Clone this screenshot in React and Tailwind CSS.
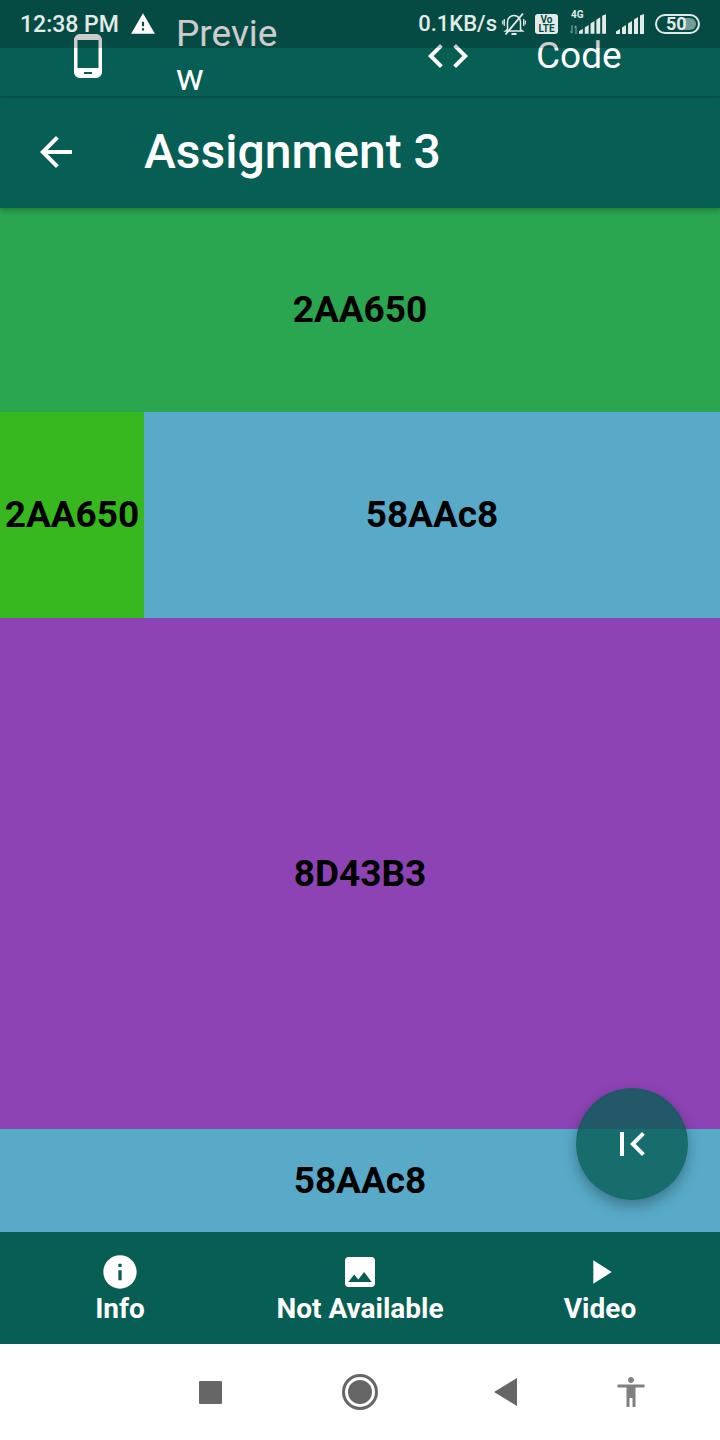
const FONT = { fontFamily: 'Roboto, sans-serif' };

function MaterialIcon({ d, className }) {
  return (
    <svg viewBox="0 0 24 24" fill="currentColor" className={className}>
      <path d={d} />
    </svg>
  );
}

const ICONS = {
  phone: 'M16 1H8C6.34 1 5 2.34 5 4v16c0 1.66 1.34 3 3 3h8c1.66 0 3-1.34 3-3V4c0-1.66-1.34-3-3-3zm-2 20h-4v-1h4v1zm3.25-3H6.75V4h10.5v14z',
  code: 'M9.4 16.6L4.8 12l4.6-4.6L8 6l-6 6 6 6 1.4-1.4zm5.2 0l4.6-4.6-4.6-4.6L16 6l6 6-6 6-1.4-1.4z',
  back: 'M20 11H7.83l5.59-5.59L12 4l-8 8 8 8 1.41-1.41L7.83 13H20v-2z',
  info: 'M12 2C6.48 2 2 6.48 2 12s4.48 10 10 10 10-4.48 10-10S17.52 2 12 2zm1 15h-2v-6h2v6zm0-8h-2V7h2v2z',
  image: 'M21 19V5c0-1.1-.9-2-2-2H5c-1.1 0-2 .9-2 2v14c0 1.1.9 2 2 2h14c1.1 0 2-.9 2-2zM8.5 13.5l2.5 3.01L14.5 12l4.5 6H5l3.5-4.5z',
  play: 'M8 5v14l11-7z',
  warning: 'M1 21h22L12 2 1 21zm12-3h-2v-2h2v2zm0-4h-2v-4h2v4z',
  first: 'M18.41 16.59L13.82 12l4.59-4.59L17 6l-6 6 6 6zM6 6h2v12H6z',
  accessibility: 'M12 2c1.1 0 2 .9 2 2s-.9 2-2 2-2-.9-2-2 .9-2 2-2zm9 7h-6v13h-2v-6h-2v6H9V9H3V7h18v2z',
};

function Signal({ className }) {
  return (
    <svg viewBox="0 0 28 20" fill="currentColor" className={className}>
      <path d="M0 20v-2.5L4 15v5z" />
      <path d="M6 20v-6.5l4-2.5v9z" />
      <path d="M12 20V9.5L16 7v13z" />
      <path d="M18 20V5.5L22 3v17z" />
      <path d="M24 20V1.5L28 0v20z" />
    </svg>
  );
}

function StatusBar() {
  return (
    <div className="absolute top-0 left-0 w-full h-12 bg-black/20 z-20 flex items-center text-[#e3ebe9] font-medium">
      <span className="ml-5 text-[23px] leading-none">12:38 PM</span>
      <MaterialIcon d={ICONS.warning} className="w-[26px] h-[26px] ml-[11px] text-white" />
      <div className="ml-auto flex items-center mr-5">
        <span className="text-[22px] leading-none">0.1KB/s</span>
        <svg viewBox="0 0 24 24" className="w-6 h-6 ml-[5px]" fill="none" stroke="currentColor" strokeWidth="1.5">
          <path d="M5.500 17.500V10a6.500 6.500 0 0 1 13 0v7.500l2 1.500H3.500z" />
          <path d="M9.500 22h5" strokeWidth="2" />
          <path d="M2.300 7v7M21.700 7v7M0.700 8.500v4M23.300 8.500v4" strokeWidth="1.2" />
          <path d="M3.500 22.500 21 1.500" strokeWidth="1.8" />
        </svg>
        <div className="ml-[9px] w-[23px] h-5 bg-[#e3ebe9] rounded-[3px] flex flex-col items-center justify-center text-[#054b43] text-[10px] leading-[9px] font-bold">
          <span>Vo</span>
          <span>LTE</span>
        </div>
        <div className="ml-[12px] relative w-[36px] h-5">
          <span className="absolute -top-[4px] left-[1px] text-[10px] leading-[10px] font-bold">4G</span>
          <svg viewBox="0 0 8 9" className="absolute left-0 bottom-0 w-2 h-[9px] opacity-50" fill="none" stroke="currentColor" strokeWidth="1.2">
            <path d="M2 0v8M0.500 6.500 2 8M6 9V1M4.500 2.500 6 1" />
          </svg>
          <Signal className="absolute right-0 bottom-0 w-[27px] h-5" />
        </div>
        <Signal className="ml-[10px] w-7 h-5" />
        <div className="ml-[11px] w-[45px] h-5 rounded-full border-2 border-[#e3ebe9] relative overflow-hidden flex items-center">
          <div className="absolute inset-y-[2px] right-[2px] w-[12px] rounded-r-full bg-[#e3ebe9]/50" />
          <span className="relative ml-[9px] text-[18px] leading-none font-bold">50</span>
        </div>
      </div>
    </div>
  );
}

function Tab({ icon, label }) {
  return (
    <div className="flex-1 flex items-center pl-16 gap-16 pt-4">
      <MaterialIcon d={icon} className="w-12 h-12 shrink-0" />
      <span className="w-[102px] text-[37px] leading-[44px] break-all">{label}</span>
    </div>
  );
}

function Block({ hex, color, className }) {
  return (
    <div className={`flex items-center justify-center text-[37px] leading-none font-bold text-black ${className}`} style={{ backgroundColor: color }}>
      {hex}
    </div>
  );
}

function BottomItem({ icon, label }) {
  return (
    <div className="flex-1 flex flex-col items-center pt-[20px]">
      <MaterialIcon d={icon} className="w-10 h-10" />
      <span className="mt-[1px] text-[28px] leading-[32px] font-bold">{label}</span>
    </div>
  );
}

export default function App() {
  return (
    <div className="relative w-[720px] h-[1440px] flex flex-col overflow-hidden" style={FONT}>
      <StatusBar />

      <div className="h-24 shrink-0 flex bg-[#075e54] text-white relative z-10 shadow-[0_1px_3px_rgba(0,0,0,0.25)]">
        <Tab icon={ICONS.phone} label="Preview" />
        <Tab icon={ICONS.code} label="Code" />
      </div>

      <div className="h-28 shrink-0 flex items-center bg-[#075e54] text-white pl-8 relative z-[5] shadow-[0_2px_6px_rgba(0,0,0,0.3)]">
        <MaterialIcon d={ICONS.back} className="w-12 h-12" />
        <h1 className="ml-16 text-[48px] leading-none font-medium">Assignment 3</h1>
      </div>

      <div className="flex-1 flex flex-col">
        <Block hex="2AA650" color="#2aa650" className="h-[204px] pb-[2px]" />
        <div className="h-[206px] flex">
          <Block hex="2AA650" color="#38b81f" className="w-[144px] pb-[2px]" />
          <Block hex="58AAc8" color="#58aac8" className="flex-1 pb-[2px]" />
        </div>
        <Block hex="8D43B3" color="#8d43b3" className="h-[511px]" />
        <Block hex="58AAc8" color="#58aac8" className="flex-1" />
      </div>

      <div className="h-28 shrink-0 flex bg-[#075e54] text-white">
        <BottomItem icon={ICONS.info} label="Info" />
        <BottomItem icon={ICONS.image} label="Not Available" />
        <BottomItem icon={ICONS.play} label="Video" />
      </div>

      <div className="h-24 shrink-0 bg-white flex items-center pl-[199px]">
        <div className="w-[23px] h-[23px] bg-[#666666] rounded-[1px]" />
        <div className="ml-[120px] w-9 h-9 rounded-full border-[3px] border-[#666666] flex items-center justify-center">
          <div className="w-6 h-6 rounded-full bg-[#666666]" />
        </div>
        <svg viewBox="0 0 23 28" className="ml-[116px] w-[23px] h-7 text-[#666666]" fill="currentColor">
          <path d="M23 0v28L0 14z" />
        </svg>
        <MaterialIcon d={ICONS.accessibility} className="ml-[96px] w-9 h-9 text-[#808080]" />
      </div>

      <button className="absolute left-[576px] top-[1088px] w-28 h-28 rounded-full bg-[#075e54]/80 text-white flex items-center justify-center shadow-[0_6px_14px_rgba(0,0,0,0.3)] z-10">
        <MaterialIcon d={ICONS.first} className="w-12 h-12" />
      </button>
    </div>
  );
}
